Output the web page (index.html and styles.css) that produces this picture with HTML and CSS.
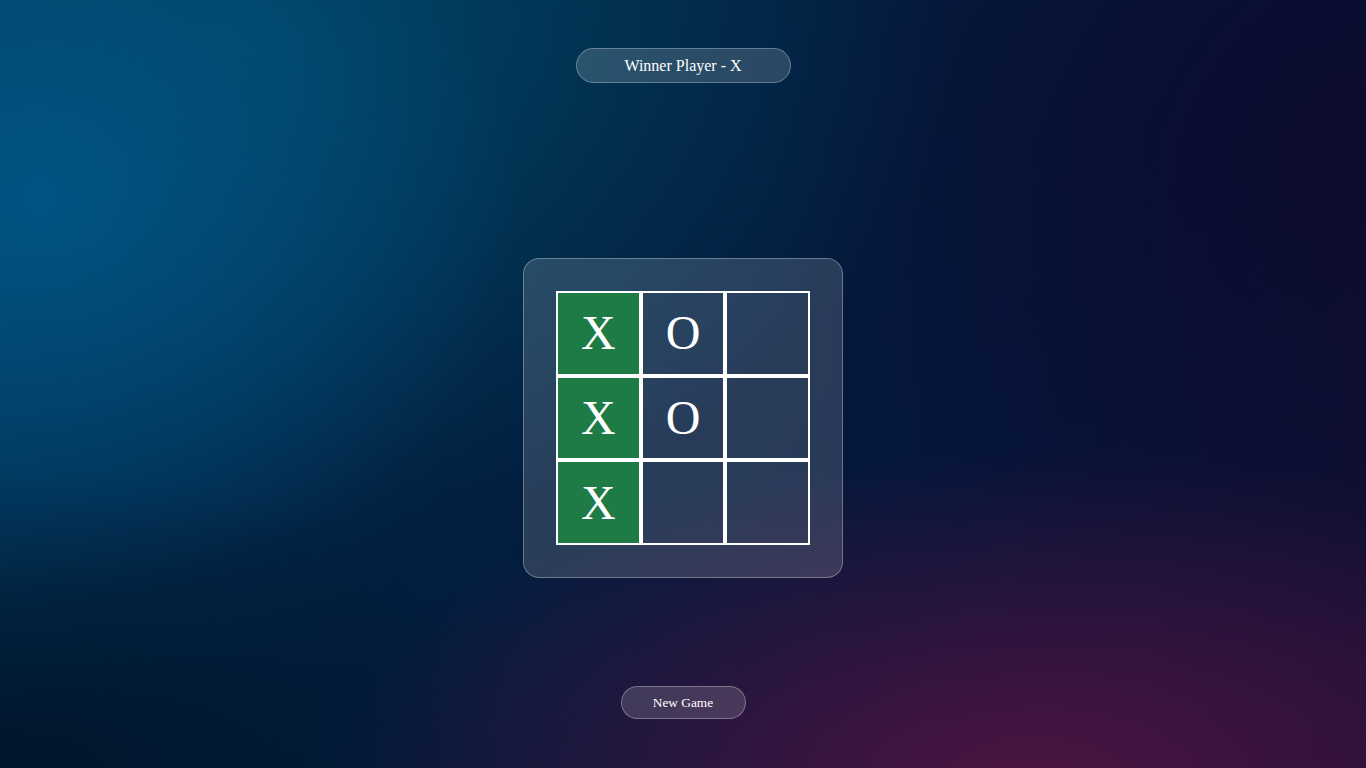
FILE: index.html
```html
<!DOCTYPE html>
<html lang="en">
<head>
<meta charset="utf-8">
<title>Tic Tac Toe</title>
<link rel="stylesheet" href="styles.css">
</head>
<body>
  <main class="app">
    <h1 class="status">Winner Player - X</h1>
    <section class="panel">
      <div class="board">
        <div class="cell win">X</div>
        <div class="cell">O</div>
        <div class="cell"></div>
        <div class="cell win">X</div>
        <div class="cell">O</div>
        <div class="cell"></div>
        <div class="cell win">X</div>
        <div class="cell"></div>
        <div class="cell"></div>
      </div>
    </section>
    <button class="reset" type="button">New Game</button>
  </main>
</body>
</html>
```

FILE: styles.css
```css
* { box-sizing: border-box; }

html, body {
  margin: 0;
  height: 100%;
}

body {
  font-family: "Liberation Serif", "Times New Roman", serif;
  color: #fff;
  background-color: #011a36;
  background-image:
    radial-gradient(ellipse 480px 400px at 40px 200px, rgba(0, 88, 140, 0.8), rgba(0, 88, 140, 0) 100%),
    radial-gradient(ellipse 700px 500px at 250px 40px, rgba(0, 80, 110, 0.65), rgba(0, 80, 110, 0) 100%),
    radial-gradient(ellipse 700px 330px at 1030px 780px, rgba(80, 20, 65, 0.95), rgba(80, 20, 65, 0) 100%),
    radial-gradient(ellipse 600px 500px at 1366px 150px, rgba(12, 10, 45, 0.9), rgba(12, 10, 45, 0) 100%),
    radial-gradient(ellipse 600px 300px at 0px 768px, rgba(0, 18, 38, 0.9), rgba(0, 18, 38, 0) 100%),
    linear-gradient(120deg, #013a5e 0%, #021f40 40%, #05153a 70%, #150f33 100%);
  overflow: hidden;
}

.app {
  height: 100%;
  display: flex;
  flex-direction: column;
  align-items: center;
  padding-top: 48px;
}

.status {
  margin: 0;
  font-size: 16px;
  font-weight: normal;
  line-height: 17px;
  padding: 8px 0;
  width: 215px;
  text-align: center;
  background: rgba(255, 255, 255, 0.16);
  border: 1px solid rgba(255, 255, 255, 0.28);
  border-radius: 18px;
}

.panel {
  margin-top: 175px;
  width: 320px;
  height: 320px;
  padding: 32px;
  border-radius: 16px;
  background: rgba(255, 255, 255, 0.15);
  border: 1px solid rgba(255, 255, 255, 0.3);
}

.board {
  width: 254px;
  height: 254px;
  display: grid;
  grid-template-columns: repeat(3, 1fr);
  grid-template-rows: repeat(3, 1fr);
}

.cell {
  border: 2px solid #fff;
  display: flex;
  align-items: center;
  justify-content: center;
  font-size: 48px;
  line-height: 1;
}

.cell.win {
  background: #1e7b45;
}

.reset {
  margin-top: 108px;
  font-family: "Liberation Serif", "Times New Roman", serif;
  font-size: 13.33px;
  line-height: 15px;
  color: #fff;
  width: 125px;
  padding: 8px 0;
  background: rgba(255, 255, 255, 0.15);
  border: 1px solid rgba(255, 255, 255, 0.3);
  border-radius: 17px;
  cursor: pointer;
}
```
